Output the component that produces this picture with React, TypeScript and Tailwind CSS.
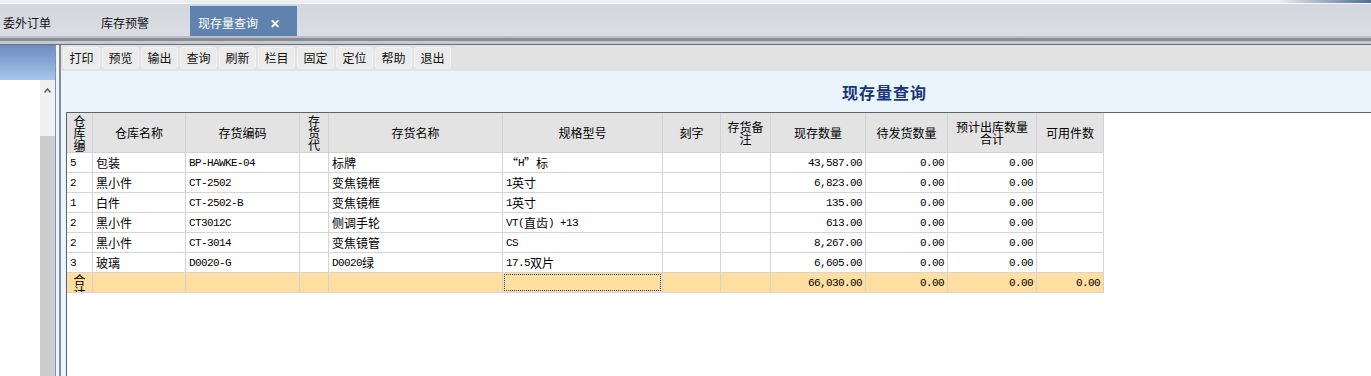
import React from "react";

const headers = [
  { t: "仓库编号", top: true },
  { t: "仓库名称" },
  { t: "存货编码" },
  { t: "存货代码", top: true },
  { t: "存货名称" },
  { t: "规格型号" },
  { t: "刻字" },
  { t: "存货备注" },
  { t: "现存数量" },
  { t: "待发货数量" },
  { t: "预计出库数量合计" },
  { t: "可用件数" },
];

const rows = [
  ["5", "包装", "BP-HAWKE-04", "", "标牌", "“H”标", "", "", "43,587.00", "0.00", "0.00", ""],
  ["2", "黑小件", "CT-2502", "", "变焦镜框", "1英寸", "", "", "6,823.00", "0.00", "0.00", ""],
  ["1", "白件", "CT-2502-B", "", "变焦镜框", "1英寸", "", "", "135.00", "0.00", "0.00", ""],
  ["2", "黑小件", "CT3012C", "", "侧调手轮", "VT(直齿) +13", "", "", "613.00", "0.00", "0.00", ""],
  ["2", "黑小件", "CT-3014", "", "变焦镜管", "CS", "", "", "8,267.00", "0.00", "0.00", ""],
  ["3", "玻璃", "D0020-G", "", "D0020绿", "17.5双片", "", "", "6,605.00", "0.00", "0.00", ""],
];

const totals = ["", "", "", "", "", "", "", "", "66,030.00", "0.00", "0.00", "0.00"];

const tools = ["打印", "预览", "输出", "查询", "刷新", "栏目", "固定", "定位", "帮助", "退出"];

// latin runs in a narrow mono face, the rest in the CJK face
function Txt({ s }: { s: string }) {
  const parts = s.match(/[\x20-\x7e]+|[^\x20-\x7e]+/g) ?? [];
  return (
    <>
      {parts.map((p, i) =>
        /[\x20-\x7e]/.test(p[0]) ? (
          <span key={i} className="font-['Liberation_Mono',monospace] text-[11px] tracking-[-0.6px] whitespace-pre">
            {p}
          </span>
        ) : (
          <span key={i}>{p}</span>
        )
      )}
    </>
  );
}

function Cell({ v, i, total }: { v: string; i: number; total?: boolean }) {
  const right = i >= 8;
  return (
    <div
      className={[
        "h-[20px] border-r border-b border-[#d4d4d4] flex items-center overflow-hidden whitespace-nowrap text-[12px] leading-[12px] text-black",
        total ? "bg-[#fedf9f]" : "bg-white",
        right ? "justify-end pr-[3px]" : "pl-[3px]",
      ].join(" ")}
    >
      <Txt s={v} />
    </div>
  );
}

export default function App() {
  return (
    <div className="w-[1371px] h-[376px] overflow-hidden bg-white flex flex-col font-['Noto_Sans_CJK_SC',sans-serif] text-black">
      {/* top strip */}
      <div className="h-[3px] flex bg-[#edeef0]">
        <div className="flex-1" />
        <div className="w-[92px] bg-gradient-to-r from-[#edeef0] to-[#4d6d98]" />
      </div>
      <div className="h-px bg-[#f6f7f8]" />

      {/* tabs */}
      <div className="h-[32px] flex items-end bg-gradient-to-b from-[#d3d7dd] to-[#dadee4] text-[12px]">
        <div className="w-[97px] h-[30px] pt-[4px] pl-[3px] flex items-center text-[#111]">委外订单</div>
        <div className="w-[93px] h-[30px] pt-[4px] pl-[4px] flex items-center text-[#111]">库存预警</div>
        <div className="w-[107px] h-[30px] pt-[4px] pl-[8px] pr-[17px] flex items-center justify-between bg-[#5f82ae] text-white">
          <span>现存量查询</span>
          <span className="font-bold text-[12px] leading-none">✕</span>
        </div>
      </div>
      <div className="h-[2px] bg-[#bcc0c6]" />
      <div className="h-[3px] bg-[#878d95]" />
      <div className="h-[3px] bg-[#c6cacf]" />
      <div className="h-px bg-[#6b7077]" />

      <div className="flex-1 flex min-h-0">
        {/* left navigation panel */}
        <div className="w-[55px] flex flex-col">
          <div className="h-[35px] bg-gradient-to-b from-[#6b8cbd] to-[#a6c6ee]" />
          <div className="flex-1 flex">
            <div className="flex-1 bg-white" />
            <div className="w-[15px] flex flex-col">
              <div className="h-[56px] bg-[#f0f0f0] flex justify-center pt-[8px]">
                <svg width="7" height="5" viewBox="0 0 7 5">
                  <polyline points="0.5,4.5 3.5,1 6.5,4.5" fill="none" stroke="#5a5a5a" strokeWidth="1.5" />
                </svg>
              </div>
              <div className="flex-1 bg-[#cdcdcd]" />
            </div>
          </div>
        </div>
        <div className="w-px bg-[#7895b5]" />
        <div className="w-[3px] bg-[#eef5fc]" />
        <div className="w-[2px] bg-[#868b91]" />

        {/* main area */}
        <div className="flex-1 flex flex-col min-w-0">
          <div className="h-[26px] bg-[#e2e2e2] flex items-center gap-[2px] pl-[2px]">
            {tools.map((t) => (
              <div
                key={t}
                className="w-[37px] h-[22px] rounded-[3px] bg-[#ebebeb] border border-[#f3f3f3] flex items-center justify-center text-[12px] text-[#111]"
              >
                {t}
              </div>
            ))}
          </div>
          <div className="h-[41px] bg-[#eaf4fd] flex items-center pl-[781px]">
            <span className="font-bold text-[16px] tracking-[1px] text-[#16357a]">现存量查询</span>
          </div>
          <div className="flex-1 flex min-h-0">
            <div className="w-[5px] bg-[#eaf4fd]" />
            <div className="flex-1 bg-white border-l border-t border-[#5d6268] overflow-hidden">
              <div className="w-[1037px] grid grid-cols-[26px_93px_114px_29px_174px_160px_58px_50px_95px_82px_89px_67px]">
                {headers.map((h) => (
                  <div
                    key={h.t}
                    className={[
                      "h-[40px] bg-[#e3e3e3] border-r border-b border-[#d2d2d2] px-[3px] flex overflow-hidden text-[12px] leading-[12px]",
                      h.top ? "items-start pt-[2px]" : "items-center",
                    ].join(" ")}
                  >
                    <div className="w-full text-center break-all">{h.t}</div>
                  </div>
                ))}
                {rows.map((r, ri) => r.map((v, i) => <Cell key={ri + "-" + i} v={v} i={i} />))}
                <div className="h-[20px] bg-[#fedf9f] border-r border-b border-[#d4d4d4] overflow-hidden px-[3px] pt-[1px] text-[12px] leading-[12px] text-center break-all">
                  合计
                </div>
                {totals.slice(1).map((v, j) =>
                  j + 1 === 5 ? (
                    <div key={"t" + j} className="h-[20px] bg-[#fedf9f] border-r border-b border-[#d4d4d4] p-px">
                      <div className="h-full border border-dotted border-[#23418c]" />
                    </div>
                  ) : (
                    <Cell key={"t" + j} v={v} i={j + 1} total />
                  )
                )}
              </div>
            </div>
          </div>
        </div>
      </div>
    </div>
  );
}
